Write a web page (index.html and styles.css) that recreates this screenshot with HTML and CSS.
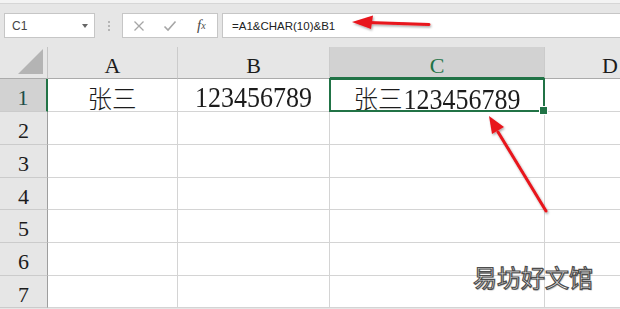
FILE: index.html
```html
<!DOCTYPE html>
<html lang="zh-CN">
<head>
    <meta charset="UTF-8">
    <title>Sheet - CHAR(10)</title>
    <link rel="stylesheet" href="styles.css">
</head>
<body>
    <div class="ribbon-edge"></div>

    <div class="formula-bar">
        <div class="name-box">
            <span>C1</span>
            <span class="caret"></span>
        </div>
        <div class="grip"><i></i><i></i><i></i></div>
        <div class="fx-tools">
            <span class="tool">
                <svg width="12" height="12" viewBox="0 0 12 12"><path d="M1.5 1.5 L10.5 10.5 M10.5 1.5 L1.5 10.5" stroke="#a6a6a6" stroke-width="1.3" fill="none"/></svg>
            </span>
            <span class="tool">
                <svg width="14" height="12" viewBox="0 0 14 12"><path d="M1.5 6.5 L5 10 L12.5 1.5" stroke="#a6a6a6" stroke-width="1.6" fill="none"/></svg>
            </span>
            <span class="tool fx">f<sub>x</sub></span>
        </div>
        <div class="formula-input">=A1&amp;CHAR(10)&amp;B1</div>
    </div>

    <main class="sheet">
        <div class="corner"></div>
        <div class="col-head">A</div>
        <div class="col-head">B</div>
        <div class="col-head selected">C</div>
        <div class="col-head clipped">D</div>

        <div class="row-head selected">1</div>
        <div class="cell"><span class="cjk">张三</span></div>
        <div class="cell"><span class="num">123456789</span></div>
        <div class="cell active"><span class="cjk">张三</span><span class="num">123456789</span></div>
        <div class="cell"></div>

        <div class="row-head">2</div>
        <div class="cell"></div><div class="cell"></div><div class="cell"></div><div class="cell"></div>
        <div class="row-head">3</div>
        <div class="cell"></div><div class="cell"></div><div class="cell"></div><div class="cell"></div>
        <div class="row-head">4</div>
        <div class="cell"></div><div class="cell"></div><div class="cell"></div><div class="cell"></div>
        <div class="row-head">5</div>
        <div class="cell"></div><div class="cell"></div><div class="cell"></div><div class="cell"></div>
        <div class="row-head">6</div>
        <div class="cell"></div><div class="cell"></div><div class="cell"></div><div class="cell"></div>
        <div class="row-head">7</div>
        <div class="cell"></div><div class="cell"></div><div class="cell"></div><div class="cell"></div>
    </main>

    <svg class="arrows" width="620" height="309" viewBox="0 0 620 309">
        <defs>
            <filter id="shade" x="-20%" y="-20%" width="140%" height="140%">
                <feDropShadow dx="1" dy="1.5" stdDeviation="1" flood-color="#000" flood-opacity="0.35"/>
            </filter>
        </defs>
        <g filter="url(#shade)" fill="#e8141c" stroke="#e8141c" stroke-linecap="round">
            <line x1="368" y1="22.5" x2="429" y2="24.5" stroke-width="3"/>
            <polygon points="352,22 373,15.5 371,29" stroke="none"/>
            <line x1="498" y1="132" x2="546" y2="211" stroke-width="3"/>
            <polygon points="489,116 504,127 492,134" stroke="none"/>
        </g>
    </svg>

    <div class="watermark">易坊好文馆</div>
</body>
</html>
```

FILE: styles.css
```css
* {
    margin: 0;
    padding: 0;
    box-sizing: border-box;
}

body {
    width: 620px;
    height: 309px;
    overflow: hidden;
    background: #e6e6e6;
    font-family: 'Liberation Sans', Arial, sans-serif;
    position: relative;
}

.ribbon-edge {
    height: 4px;
    background: #f3f3f3;
    border-bottom: 1px solid #d6d6d6;
}

/* formula bar */

.formula-bar {
    display: flex;
    align-items: stretch;
    height: 43px;
    padding: 9px 0 9px 4px;
}

.name-box {
    width: 91px;
    background: #fff;
    border: 1px solid #c6c6c6;
    display: flex;
    align-items: center;
    justify-content: space-between;
    padding: 0 6px 0 7px;
    font-size: 12px;
    color: #444;
}

.caret {
    width: 0;
    height: 0;
    border-left: 3.5px solid transparent;
    border-right: 3.5px solid transparent;
    border-top: 4px solid #666;
}

.grip {
    width: 27px;
    display: flex;
    flex-direction: column;
    align-items: center;
    justify-content: center;
    gap: 2px;
}

.grip i {
    width: 2px;
    height: 2px;
    background: #b5b5b5;
}

.fx-tools {
    width: 96px;
    background: #fff;
    border: 1px solid #c6c6c6;
    display: flex;
    align-items: center;
}

.tool {
    width: 32px;
    display: flex;
    justify-content: center;
    align-items: center;
}

.fx {
    font-family: 'Liberation Serif', serif;
    font-style: italic;
    font-size: 15px;
    color: #4a4a4a;
}

.fx sub {
    font-size: 10px;
    vertical-align: -1px;
}

.formula-input {
    flex: 1;
    margin-left: 4px;
    background: #fff;
    border: 1px solid #c6c6c6;
    border-right: none;
    font-size: 11.5px;
    color: #222;
    display: flex;
    align-items: center;
    padding-left: 9px;
}

/* sheet */

.sheet {
    display: grid;
    grid-template-columns: 48px 130px 152px 215px 75px;
    grid-template-rows: 32px 33px 33px 33px 32px 33px 33px 32px;
    background: #fff;
    font-family: 'Liberation Serif', 'Noto Sans CJK SC', serif;
    color: #1c1c1c;
}

.corner {
    background: #e6e6e6;
    border-right: 1px solid #c4c4c4;
    border-bottom: 1px solid #ababab;
    position: relative;
}

.corner::after {
    content: '';
    position: absolute;
    right: 4px;
    bottom: 4px;
    border-left: 25px solid transparent;
    border-bottom: 25px solid #b4b4b4;
}

.col-head {
    background: #e6e6e6;
    border-right: 1px solid #cbcbcb;
    border-bottom: 1px solid #ababab;
    display: flex;
    justify-content: center;
    align-items: center;
    padding-top: 6px;
    font-size: 22px;
}

.col-head.selected {
    background: #d2d2d2;
    color: #217346;
    border-bottom: 2px solid #217346;
    padding-top: 7px;
}

.col-head.clipped {
    border-right: none;
    justify-content: flex-start;
    padding-left: 57px;
}

.row-head {
    background: #e6e6e6;
    border-right: 1px solid #9e9e9e;
    border-bottom: 1px solid #cbcbcb;
    display: flex;
    justify-content: center;
    align-items: center;
    padding-top: 6px;
    font-size: 22px;
}

.row-head.selected {
    background: #d2d2d2;
    color: #1d4e48;
    border-right: 2px solid #217346;
}

.cell {
    border-right: 1px solid #d4d4d4;
    border-bottom: 1px solid #d4d4d4;
    display: flex;
    justify-content: center;
    align-items: baseline;
    padding-top: 5px;
    white-space: nowrap;
}

.cell:nth-child(5n) {
    border-right: none;
}

.num {
    display: inline-block;
    font-size: 26px;
    line-height: 28px;
    transform: scaleY(1.14);
}

.cjk {
    display: inline-block;
    font-family: 'Noto Sans CJK SC', sans-serif;
    font-size: 24.5px;
    line-height: 28px;
    font-weight: 300;
    margin-right: 1px;
}

.cell.active {
    position: relative;
}

.cell.active::after {
    content: '';
    position: absolute;
    top: -1px;
    left: -1px;
    right: -1px;
    bottom: -1px;
    border: 2px solid #217346;
}

.cell.active::before {
    content: '';
    position: absolute;
    right: -4px;
    bottom: -4px;
    width: 7px;
    height: 7px;
    background: #217346;
    border: 1px solid #fff;
    z-index: 1;
}

/* annotations */

.arrows {
    position: absolute;
    top: 0;
    left: 0;
    pointer-events: none;
}

.watermark {
    position: absolute;
    left: 473px;
    top: 260px;
    font-family: 'Noto Sans CJK SC', sans-serif;
    font-size: 24px;
    line-height: 34px;
    color: #fff;
    -webkit-text-stroke: 1.2px #4d4d4d;
    text-shadow: 1px 1px 1px rgba(0, 0, 0, 0.25);
}
```
